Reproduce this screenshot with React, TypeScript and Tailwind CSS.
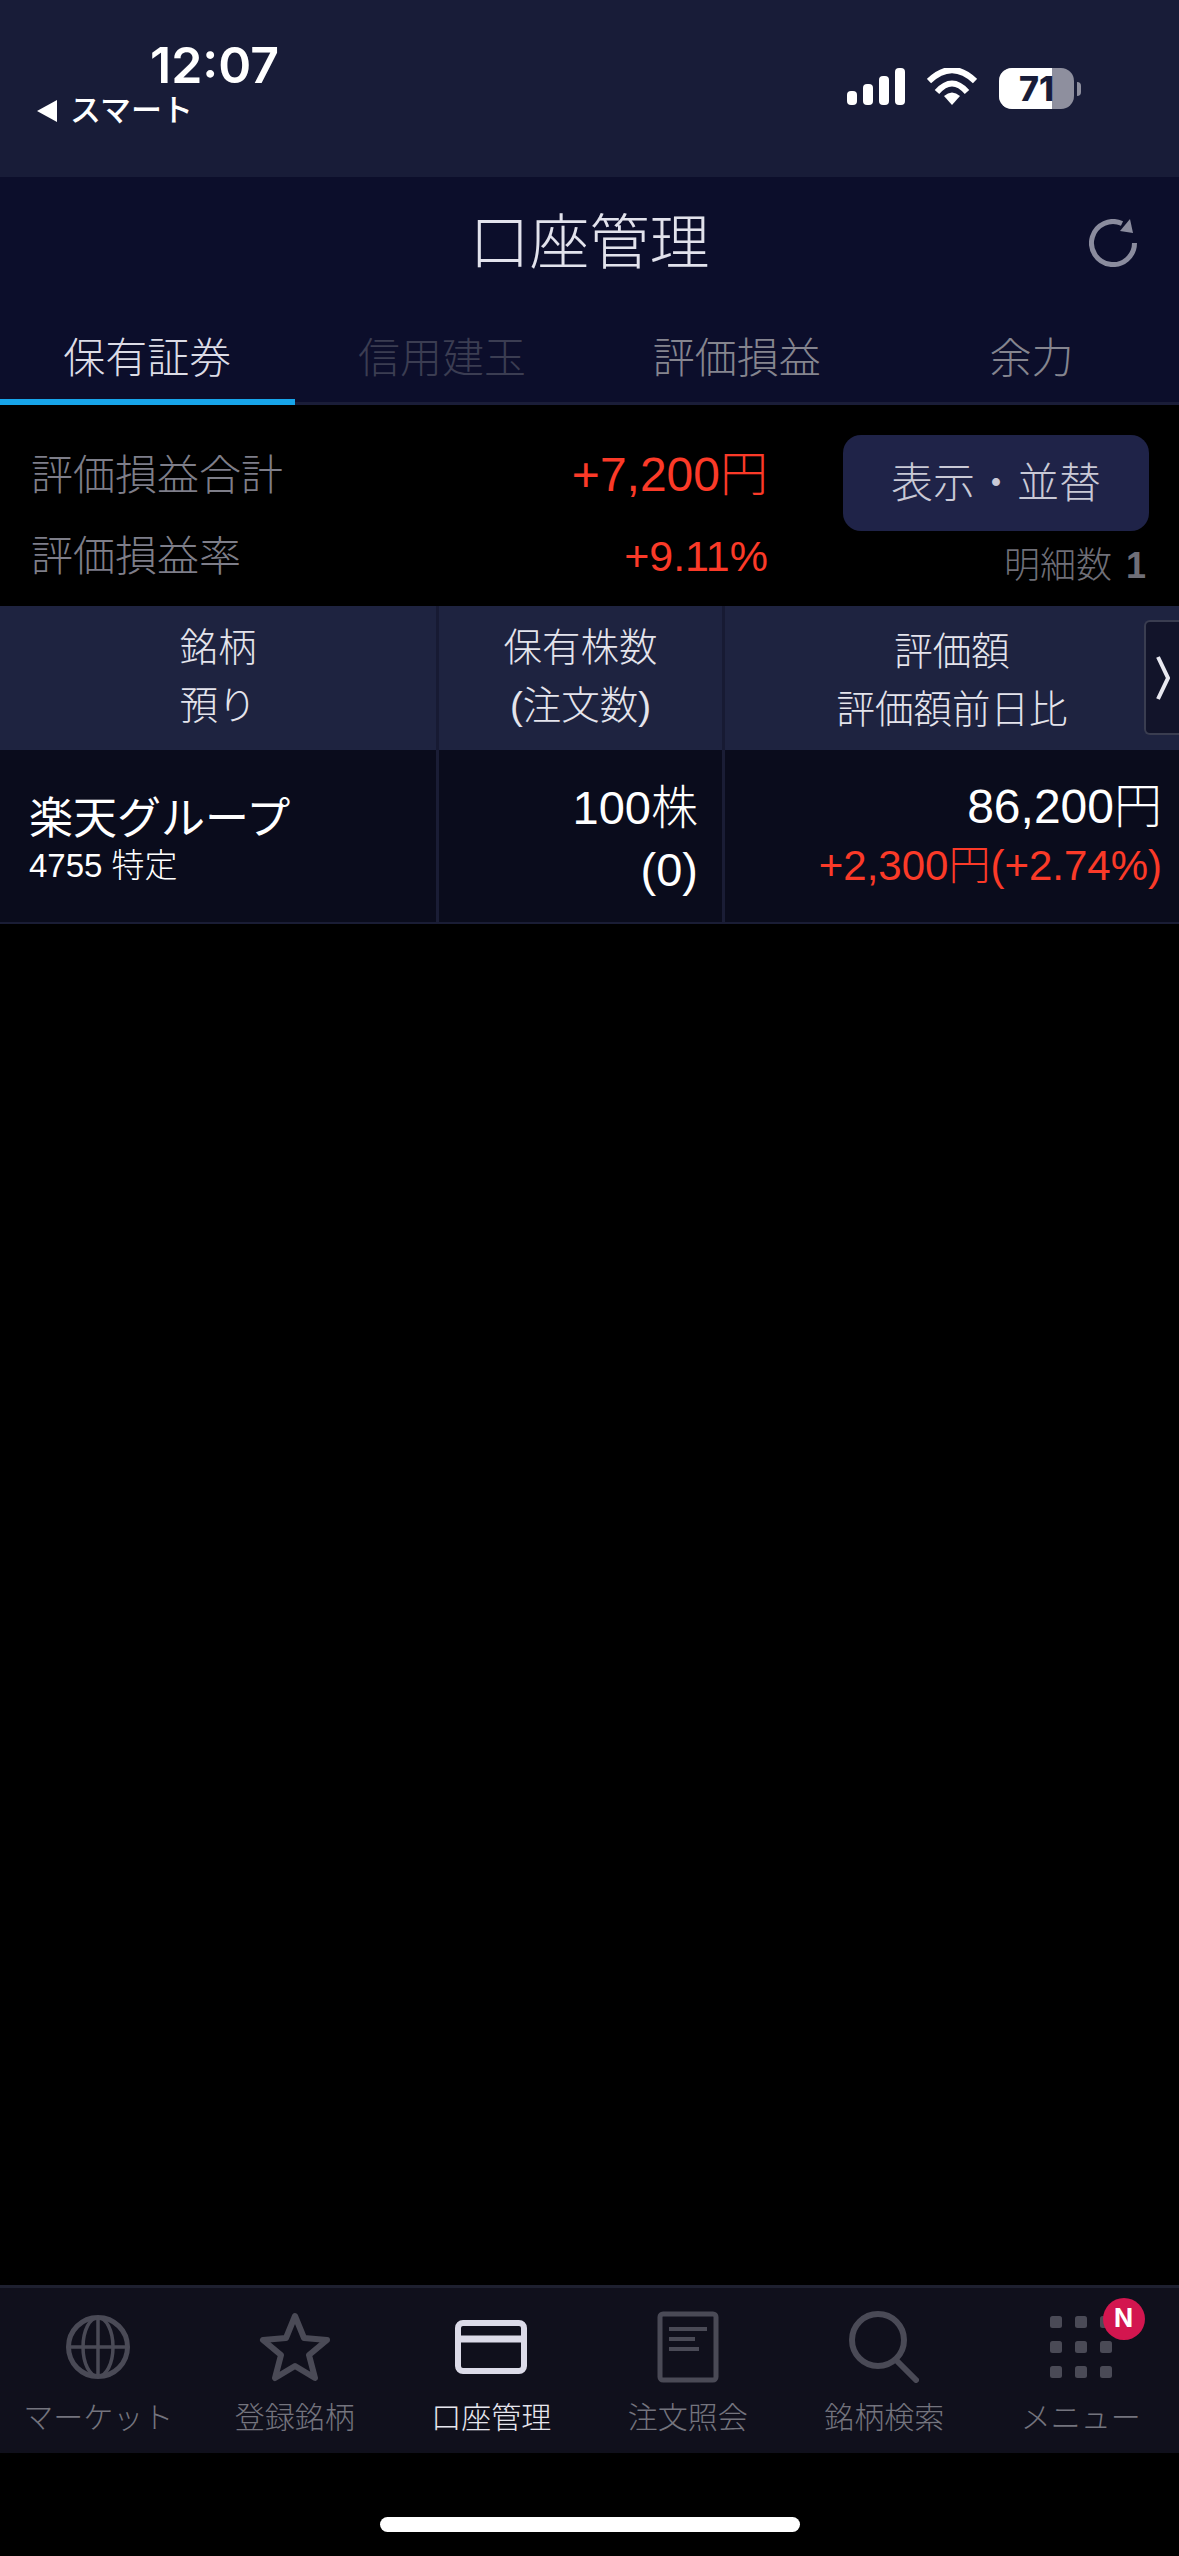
const jp = "font-['Liberation_Sans','Noto_Sans_CJK_JP',sans-serif]";

function SignalIcon() {
  return (
    <svg width="58" height="37" viewBox="0 0 58 37" fill="#fff">
      <rect x="0" y="23" width="10" height="14" rx="4" />
      <rect x="16" y="16" width="10" height="21" rx="4" />
      <rect x="32" y="8" width="10" height="29" rx="4" />
      <rect x="48" y="0" width="10" height="37" rx="4" />
    </svg>
  );
}

function WifiIcon() {
  return (
    <svg width="50" height="38" viewBox="0 0 50 38" fill="none" stroke="#fff" strokeWidth="6">
      <path d="M2 13 Q25 -9 48 13" />
      <path d="M10 24 Q25 7 40 24" />
      <path d="M17 28 L25 37 L33 28 Q25 21 17 28 Z" fill="#fff" strokeWidth="0" />
    </svg>
  );
}

function BatteryIcon() {
  return (
    <div className="flex h-[41px] items-center gap-[3px]">
      <div className="relative flex h-[41px] w-[75px] overflow-hidden rounded-[13px] bg-[#8e8f9e]">
        <div className="h-full w-[53px] bg-white" />
        <span className="absolute inset-0 flex items-center justify-center font-['Inter',sans-serif] text-[34px] font-extrabold text-[#181c38]">
          71
        </span>
      </div>
      <div className="h-[14px] w-[4px] rounded-r-full bg-[#8e8f9e]" />
    </div>
  );
}

function RefreshIcon() {
  return (
    <svg width="48" height="48" viewBox="0 0 48 48" fill="none" className="text-[#8b8c9e]">
      <path d="M45.5 24 A21.5 21.5 0 1 1 33 4.5" stroke="currentColor" strokeWidth="5" />
      <path d="M41 0 L44 14 L31 12 Z" fill="currentColor" />
    </svg>
  );
}

function StatusBar() {
  return (
    <div className="flex h-[177px] bg-[#181c38] text-white">
      <div className="pl-[37px] pt-[36px]">
        <div className="pl-[113px] font-['Inter',sans-serif] text-[50px] font-semibold leading-[58px]">12:07</div>
        <div className={`flex h-[34px] items-center gap-[13px] ${jp} text-[31px] font-medium leading-[34px]`}>
          <span className="h-0 w-0 border-y-[11px] border-r-[20px] border-y-transparent border-r-white" />
          <span>スマート</span>
        </div>
      </div>
      <div className="ml-auto flex items-start gap-[22px] pr-[98px] pt-[68px]">
        <SignalIcon />
        <WifiIcon />
        <BatteryIcon />
      </div>
    </div>
  );
}

function Header() {
  const tabs = [
    { label: "保有証券", color: "text-[#dcdce6]" },
    { label: "信用建玉", color: "text-[#3b3d52]" },
    { label: "評価損益", color: "text-[#85858f]" },
    { label: "余力", color: "text-[#85858f]" },
  ];
  return (
    <div className="bg-[#0c0e2b]">
      <div className="relative flex h-[122px] items-center justify-center pt-[12px]">
        <h1 className={`${jp} text-[60px] font-light leading-none text-[#e2e2ec]`}>口座管理</h1>
        <div className="absolute right-[42px] top-[42px]">
          <RefreshIcon />
        </div>
      </div>
      <div className="grid h-[106px] grid-cols-4 border-b-[3px] border-[#1a1d38]">
        {tabs.map((tab, i) => (
          <div
            key={tab.label}
            className={`relative flex justify-center pt-[30px] ${jp} text-[42px] font-light leading-[60px] ${tab.color}`}
          >
            {tab.label}
            {i === 0 && <div className="absolute inset-x-0 bottom-[-3px] h-[6px] bg-[#17a5ea]" />}
          </div>
        ))}
      </div>
    </div>
  );
}

function Summary() {
  return (
    <div className={`flex h-[201px] ${jp} font-light`}>
      <div className="w-[768px] pl-[31px] pt-[40px]">
        <div className="flex h-[60px] items-center justify-between">
          <span className="text-[42px] text-[#7e7e89]">評価損益合計</span>
          <span className="text-[48px] text-[#fb3a28]">+7,200円</span>
        </div>
        <div className="mt-[21px] flex h-[60px] items-center justify-between">
          <span className="text-[42px] text-[#7e7e89]">評価損益率</span>
          <span className="text-[43px] text-[#fb3a28]">+9.11%</span>
        </div>
      </div>
      <div className="ml-auto mr-[30px] w-[306px] pt-[30px]">
        <div className="flex h-[96px] items-center justify-center rounded-[18px] bg-[#1f2348] text-[42px] text-[#c9c9d6]">
          表示・並替
        </div>
        <div className="mt-[12px] flex items-center justify-end gap-[14px] pr-[3px] text-[36px] leading-[46px] text-[#6f6f78]">
          <span>明細数</span>
          <span className="font-bold">1</span>
        </div>
      </div>
    </div>
  );
}

function HoldingsTable() {
  return (
    <div className={`relative ${jp} font-light`}>
      <div className="grid h-[144px] grid-cols-[439px_286px_1fr] bg-[#1e2340] text-center text-[38.5px] leading-[58px] text-[#e4e4ec]">
        <div className="border-r-[3px] border-[#171a33] pt-[13px]">
          <div>銘柄</div>
          <div>預り</div>
        </div>
        <div className="border-r-[3px] border-[#171a33] pt-[13px]">
          <div>保有株数</div>
          <div>(注文数)</div>
        </div>
        <div className="pt-[17px]">
          <div>評価額</div>
          <div>評価額前日比</div>
        </div>
      </div>
      <div className="grid h-[174px] grid-cols-[439px_286px_1fr] border-b-[2px] border-[#1a1d35] bg-[#0a0c1c] text-white">
        <div className="border-r-[3px] border-[#1a1d35] pl-[29px] pt-[40px]">
          <div className="text-[44px] font-normal leading-[58px]">楽天グループ</div>
          <div className="text-[33px] leading-[35px]">4755 特定</div>
        </div>
        <div className="border-r-[3px] border-[#1a1d35] pr-[24px] pt-[27px] text-right text-[47px] leading-[62px]">
          <div>100株</div>
          <div>(0)</div>
        </div>
        <div className="pr-[17px] pt-[28px] text-right">
          <div className="text-[48px] leading-[58px]">86,200円</div>
          <div className="text-[42px] leading-[60px] text-[#fb3a28]">+2,300円(+2.74%)</div>
        </div>
      </div>
      {/* scroll hint over the right edge of the header */}
      <div className="absolute right-0 top-[14px] flex h-[115px] w-[35px] items-center justify-center rounded-l-[6px] border-y-[2px] border-l-[2px] border-[#3a3d50] bg-[#12142a]">
        <svg width="14" height="44" viewBox="0 0 14 44" fill="none">
          <path d="M2 1 L12 22 L2 43" stroke="#e8e8f0" strokeWidth="4" />
        </svg>
      </div>
    </div>
  );
}

const muted = "#4a4a56";

const navItems = [
  {
    label: "マーケット",
    icon: (
      <svg width="64" height="64" viewBox="0 0 64 64" fill="none" stroke={muted} strokeWidth="3.5">
        <circle cx="32" cy="32" r="29.5" strokeWidth="5" />
        <ellipse cx="32" cy="32" rx="15" ry="29.5" />
        <path d="M32 2 V62 M3 32 H61" />
      </svg>
    ),
  },
  {
    label: "登録銘柄",
    icon: (
      <svg width="72" height="70" viewBox="0 0 72 70" fill="none" stroke={muted} strokeWidth="6" strokeLinejoin="round">
        <path d="M36 4 L45 26 L68 28 L50 43 L56 66 L36 54 L16 66 L22 43 L4 28 L27 26 Z" />
      </svg>
    ),
  },
  {
    label: "口座管理",
    active: true,
    icon: (
      <svg width="72" height="54" viewBox="0 0 72 54" fill="none" stroke="#dcdbe8" strokeWidth="6">
        <rect x="3" y="3" width="66" height="48" rx="5" />
        <path d="M3 19 H69" strokeWidth="7" />
      </svg>
    ),
  },
  {
    label: "注文照会",
    icon: (
      <svg width="62" height="72" viewBox="0 0 62 72" fill="none" stroke={muted} strokeWidth="5">
        <rect x="3" y="3" width="56" height="66" rx="3" />
        <path d="M12 18 H50 M12 28 H38 M12 38 H42" strokeWidth="4" />
      </svg>
    ),
  },
  {
    label: "銘柄検索",
    icon: (
      <svg width="70" height="72" viewBox="0 0 70 72" fill="none" stroke={muted} strokeWidth="6" strokeLinecap="round">
        <circle cx="29" cy="29" r="26" />
        <path d="M48 50 L67 69" />
      </svg>
    ),
  },
  {
    label: "メニュー",
    badge: true,
    icon: (
      <svg width="62" height="64" viewBox="0 0 62 64" fill={muted}>
        {[0, 25, 50].map((y) =>
          [0, 25, 50].map((x) => <rect key={`${x}-${y}`} x={x} y={y + 1} width="12" height="12" rx="2.5" />),
        )}
      </svg>
    ),
  },
];

function BottomNav() {
  return (
    <nav className="grid h-[168px] grid-cols-6 border-t-[3px] border-[#1e2030] bg-[#10101c]">
      {navItems.map((item) => (
        <div key={item.label} className="relative flex flex-col items-center">
          <div className="flex h-[100px] items-center justify-center pt-[18px]">{item.icon}</div>
          <span
            className={`mt-[12px] ${jp} text-[30px] font-light leading-[36px] whitespace-nowrap ${
              item.active ? "text-[#e6e6ee]" : "text-[#74747e]"
            }`}
          >
            {item.label}
          </span>
          {item.badge && (
            <span className="absolute left-[120px] top-[10px] flex h-[42px] w-[42px] items-center justify-center rounded-full bg-[#d3164f] font-['Inter',sans-serif] text-[25px] font-bold text-white">
              N
            </span>
          )}
        </div>
      ))}
    </nav>
  );
}

export default function App() {
  return (
    <div className="flex h-[2556px] w-[1179px] flex-col overflow-hidden bg-black">
      <StatusBar />
      <Header />
      <Summary />
      <HoldingsTable />
      <div className="flex-1" />
      <BottomNav />
      <div className="flex h-[103px] justify-center pt-[64px]">
        <div className="h-[15px] w-[420px] rounded-full bg-white" />
      </div>
    </div>
  );
}
